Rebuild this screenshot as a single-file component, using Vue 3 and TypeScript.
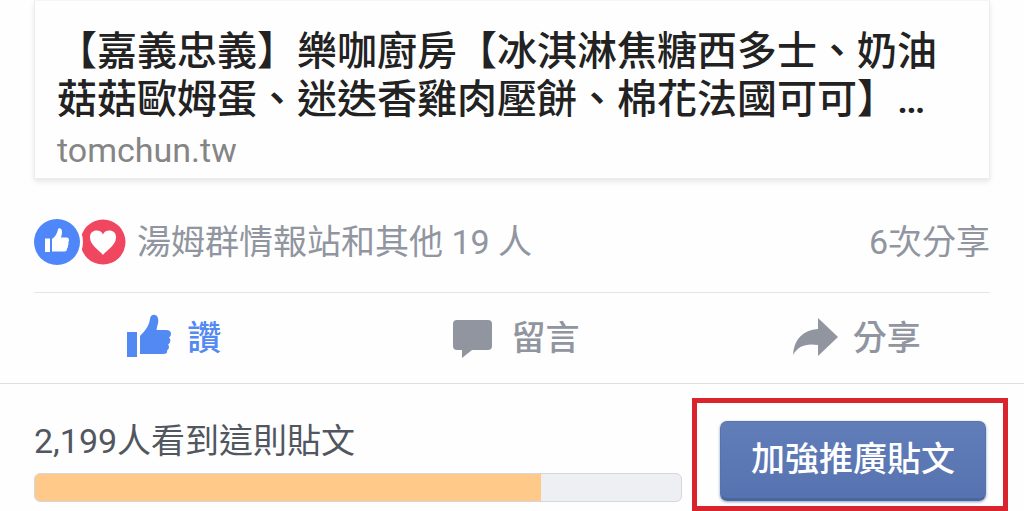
<script setup lang="ts">
const post = {
  title: '【嘉義忠義】樂咖廚房【冰淇淋焦糖西多士、奶油菇菇歐姆蛋、迷迭香雞肉壓餅、棉花法國可可】…',
  domain: 'tomchun.tw',
  reactions: '湯姆群情報站和其他 19 人',
  shares: '6次分享',
}

const reach = { label: '2,199人看到這則貼文', percent: 78.4 }
</script>

<template>
  <main class="page">
    <a class="card" href="#">
      <h1 class="title">{{ post.title }}</h1>
      <p class="domain">{{ post.domain }}</p>
    </a>

    <section class="stats">
      <svg class="badges" viewBox="0 0 92 46" aria-hidden="true">
        <circle cx="69" cy="23" r="22.500" fill="#f0465f" />
        <path
          d="M69 36C65 31 56 26 56 18.500C56 13.500 59 11.500 62.500 11.500C66 11.500 68 13 69 15.500C70 13 72 11.500 75.500 11.500C79 11.500 82 13.500 82 18.500C82 26 73 31 69 36Z"
          fill="#fff"
        />
        <circle cx="23" cy="23" r="26" fill="#fefefe" />
        <circle cx="23" cy="23" r="23" fill="#4f87fa" />
        <path
          d="M11 19.500H16V33H11ZM18 20C21 18 23 15 24 10.500C24.300 8.800 27.500 8.500 28 12C28.200 14.500 27.500 16.500 27 18.500H33Q35 18.500 35 21Q35 22.500 34.300 23.300Q35 25 34 26.500Q34.300 28.500 33 29.500Q33 32.500 30.500 32.500H18Z"
          fill="#fff"
        />
      </svg>
      <a class="who" href="#">{{ post.reactions }}</a>
      <a class="shares" href="#">{{ post.shares }}</a>
    </section>

    <nav class="actions">
      <button class="action liked" type="button">
        <svg class="icon" viewBox="0 0 46 46" aria-hidden="true">
          <path
            d="M1 17H11V42H1ZM14 21C19 16 23 11 24 4C24.500 0 27 -0.500 29 0C33 1 33 7 31 12L30.500 15H40Q45 15 45 19Q45 21.500 43 22.500Q45.500 25 43.500 28Q43 29 42 29.500Q44 32 42 34.500L41 35.500Q42 39 37 39H14Z"
            fill="currentColor"
          />
        </svg>
        <span>讚</span>
      </button>
      <button class="action" type="button">
        <svg class="icon" viewBox="0 0 46 46" aria-hidden="true">
          <path
            d="M6 5H38Q42 5 42 9V31Q42 35 38 35H22L12 43V35H7Q3 35 3 31V9Q3 5 7 5Z"
            fill="currentColor"
          />
        </svg>
        <span>留言</span>
      </button>
      <button class="action" type="button">
        <svg class="icon" viewBox="0 0 46 46" aria-hidden="true">
          <path d="M26 3L46 22L26 41V30C14 28 6 31 1 40C2 24 11 15 26 14Z" fill="currentColor" />
        </svg>
        <span>分享</span>
      </button>
    </nav>

    <footer class="promo">
      <div class="reach">
        <p id="reach-label" class="reach-label">{{ reach.label }}</p>
        <div
          class="track"
          role="progressbar"
          aria-labelledby="reach-label"
          :aria-valuenow="reach.percent"
          aria-valuemin="0"
          aria-valuemax="100"
        >
          <div class="fill" :style="{ width: reach.percent + '%' }"></div>
        </div>
      </div>
      <div class="boost-wrap">
        <button class="boost" type="button">加強推廣貼文</button>
        <span class="highlight"></span>
      </div>
    </footer>
  </main>
</template>

<style>
body {
  margin: 0;
  background: #fefefe;
}
</style>

<style scoped>
.page {
  font-family: Roboto, 'Noto Sans CJK TC', sans-serif;
  font-size: 34px;
  line-height: 40px;
  color: #9095a0;
}

.card {
  display: block;
  margin: 0 34px;
  padding: 27px 22px 8px;
  border: 1px solid #ececec;
  border-top: 1px solid #f7f5ee;
  box-shadow: 0 3px 5px #e8e8e8;
  background: #fefefe;
  text-decoration: none;
}

.title {
  margin: 0;
  font-size: 40px;
  line-height: 48px;
  font-weight: 500;
  color: #222;
  word-break: break-all;
}

.domain {
  margin: 6px 0 0;
  color: #858585;
}

.stats {
  display: flex;
  align-items: center;
  margin: 0 34px;
  padding: 40px 0 27px;
  border-bottom: 1px solid #e4e5e8;
}

.badges {
  width: 92px;
  height: 46px;
  margin-right: 11px;
}

.who,
.shares {
  color: inherit;
  text-decoration: none;
}

.shares {
  margin-left: auto;
}

.actions {
  display: flex;
  padding: 22px 0;
  border-bottom: 1px solid #dcdee2;
}

.action {
  flex: 1;
  display: flex;
  align-items: center;
  justify-content: center;
  gap: 15px;
  padding: 0 0 0 6px;
  border: 0;
  background: none;
  font: inherit;
  font-weight: 500;
  color: #9095a0;
}

.liked {
  color: #5389f2;
}

.icon {
  width: 46px;
  height: 46px;
  overflow: visible;
}

.promo {
  display: flex;
  align-items: flex-start;
  gap: 38px;
  padding: 37px 38px 10px 34px;
}

.reach {
  flex: 1;
}

.reach-label {
  margin: 0 0 12px;
  color: #51565f;
}

.track {
  height: 27px;
  border: 1px solid #d5d7dc;
  border-radius: 6px;
  background: #eeeff2;
  overflow: hidden;
}

.fill {
  height: 100%;
  background: #fec989;
}

.boost-wrap {
  position: relative;
}

.boost {
  display: block;
  height: 80px;
  padding: 0 30px 2px;
  border: 1px solid #5873ab;
  border-bottom: 3px solid #4b659d;
  border-radius: 7px;
  background: linear-gradient(#627eb9, #5672b0);
  box-shadow: 0 1px 3px #8d9dc0;
  font: inherit;
  font-weight: 500;
  color: #fff;
}

.highlight {
  position: absolute;
  inset: -23px -22px -10px -28px;
  border: 5px solid #d9242e;
  pointer-events: none;
}
</style>
